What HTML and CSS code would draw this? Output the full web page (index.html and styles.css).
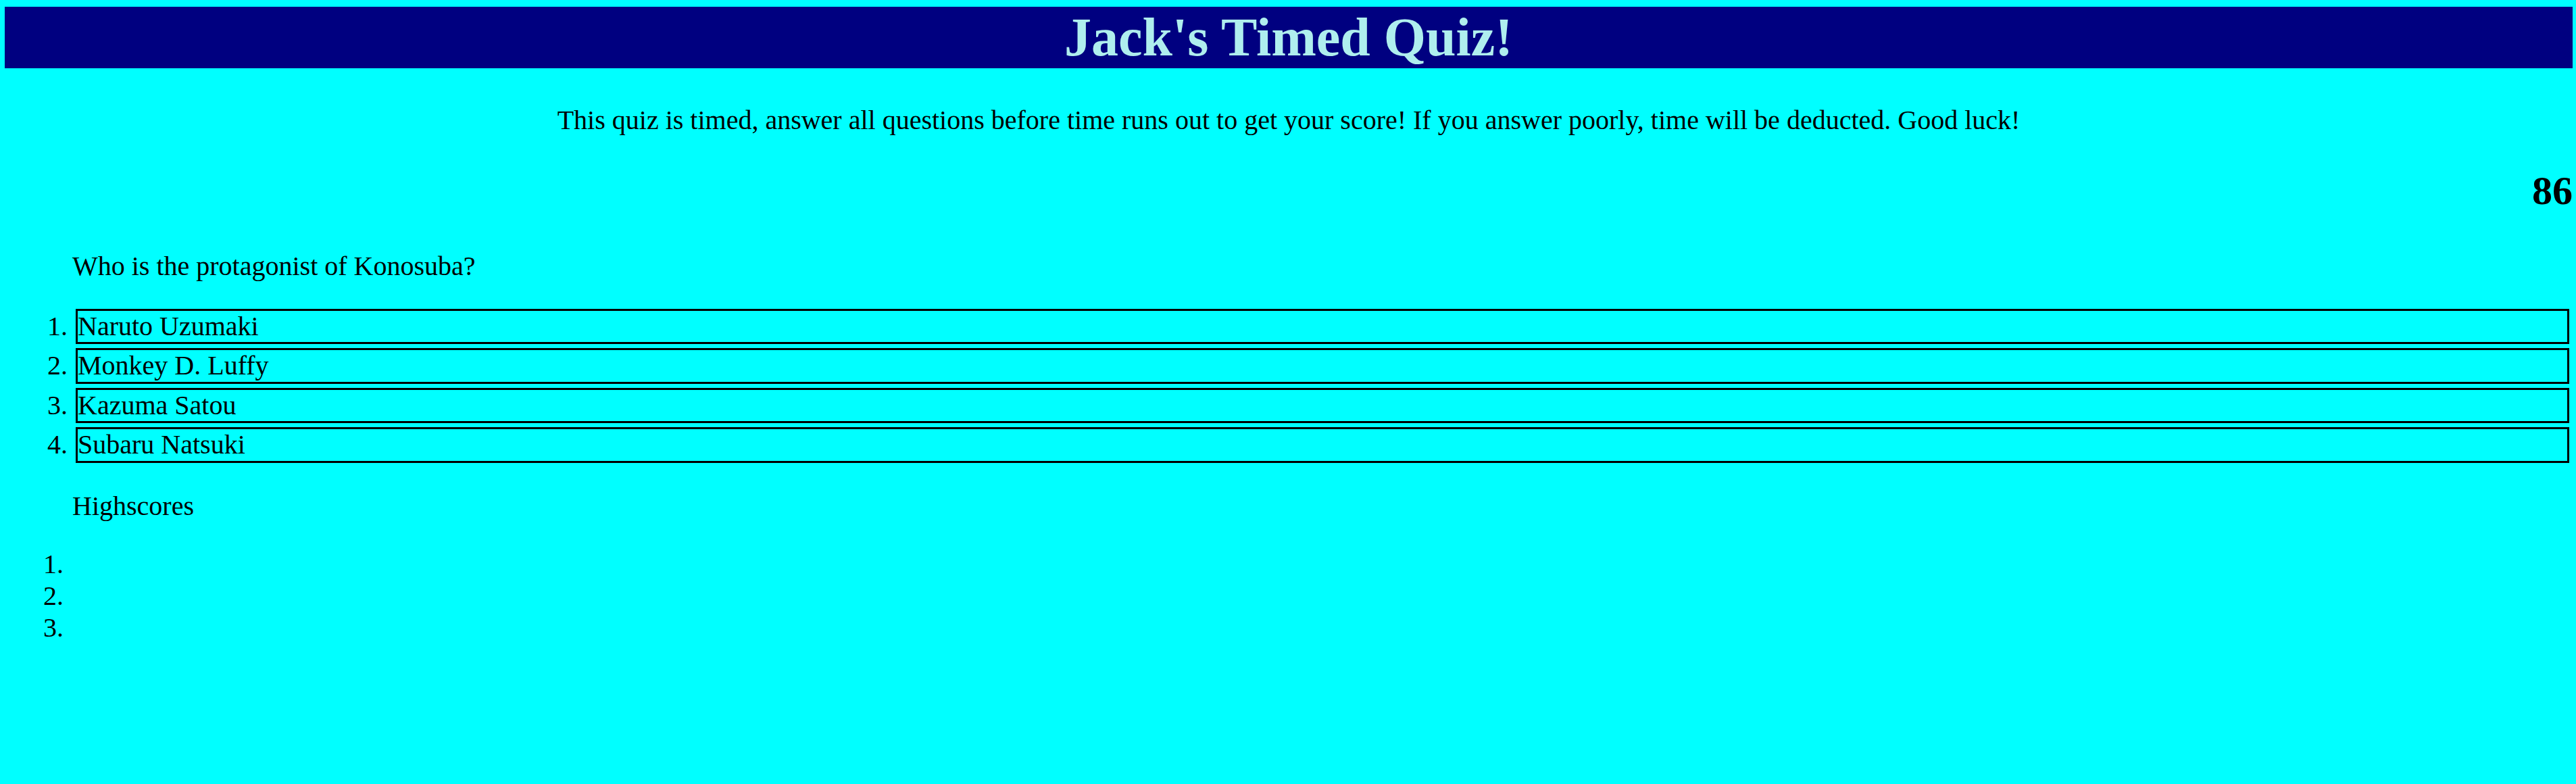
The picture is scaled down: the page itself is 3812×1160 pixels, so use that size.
FILE: index.html
```html
<!DOCTYPE html>
<html lang="en">
<head>
<meta charset="utf-8">
<title>Jack's Timed Quiz!</title>
<link rel="stylesheet" href="styles.css">
</head>
<body>
<header class="banner">
  <h1 class="title">Jack's Timed Quiz!</h1>
</header>
<p class="intro">This quiz is timed, answer all questions before time runs out to get your score! If you answer poorly, time will be deducted. Good luck!</p>
<h2 class="timer">86</h2>
<p class="question">Who is the protagonist of Konosuba?</p>
<ol class="options">
  <li><div class="option">Naruto Uzumaki</div></li>
  <li><div class="option">Monkey D. Luffy</div></li>
  <li><div class="option">Kazuma Satou</div></li>
  <li><div class="option">Subaru Natsuki</div></li>
</ol>
<p class="scores-title">Highscores</p>
<ol class="scores">
  <li></li>
  <li></li>
  <li></li>
</ol>
</body>
</html>
```
FILE: styles.css
```css
html {
  background: #00ffff;
}
body {
  margin: 10px 5px 0 7px;
  background: #00ffff;
  color: #000;
  font-family: "Liberation Serif", "Times New Roman", serif;
  font-size: 40px;
  line-height: 46px;
}
.banner {
  background: #000080;
  margin: 0 0 53.5px 0;
}
.title {
  margin: 0;
  font-size: 80px;
  line-height: 91px;
  font-weight: bold;
  color: #afeeee;
  text-align: center;
}
.intro {
  margin: 0;
  text-align: center;
}
.timer {
  margin: 47.5px 0 0 0;
  font-size: 60px;
  line-height: 69px;
  font-weight: bold;
  text-align: right;
}
.question {
  margin: 53.5px 0 40px 100px;
}
.options {
  margin: 0 0 41.5px 0;
  padding: 0 0 0 103px;
}
.options li {
  margin: 0;
}
.option {
  border: 3px solid #000;
  margin: 0 5px 6px 2px;
  line-height: 46.6px;
}
.scores-title {
  margin: 0 0 40px 100px;
}
.scores {
  margin: 0;
  padding: 0 0 0 97px;
}
.scores li {
  min-height: 46.6px;
}
```
